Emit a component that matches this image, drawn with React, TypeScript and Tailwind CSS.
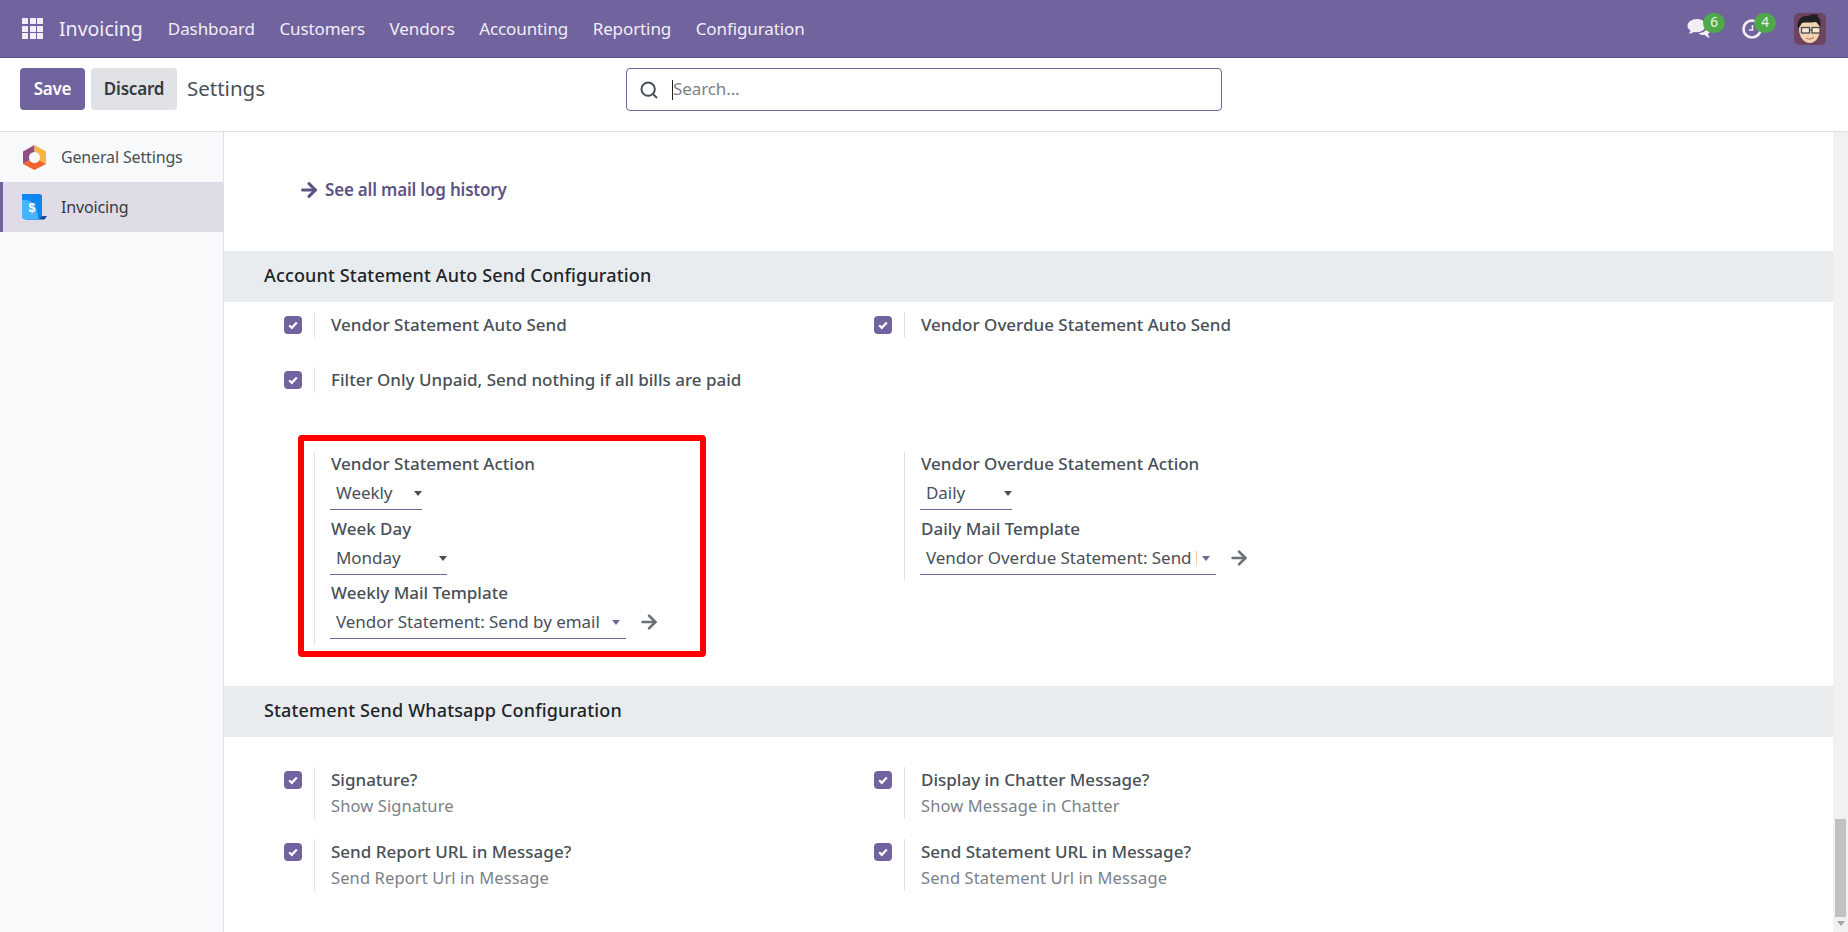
import { Search, ArrowRight } from "lucide-react";

const font = { fontFamily: '"Noto Sans", sans-serif' };

const menus = ["Dashboard", "Customers", "Vendors", "Accounting", "Reporting", "Configuration"];

function CheckBox() {
  return (
    <span className="mt-[4px] mr-[12px] flex h-[18px] w-[18px] shrink-0 items-center justify-center rounded-[4px] bg-[#71639e]">
      <svg width="12" height="12" viewBox="0 0 12 12" fill="none">
        <path d="M2.2 6.2 4.8 8.8 9.8 3.4" stroke="#fff" strokeWidth="2.2" />
      </svg>
    </span>
  );
}

function CheckRow({ label, sub }: { label: string; sub?: string }) {
  return (
    <div className="flex items-start">
      <CheckBox />
      <div className={`border-l border-[#dee2e6] pl-[16px] ${sub ? "h-[52px]" : "h-[26px]"}`}>
        <div className="pt-[1px] text-[17px] leading-[24px] font-medium text-[#495057]">{label}</div>
        {sub && <div className="mt-[2px] text-[16.5px] leading-[24px] tracking-[0.12px] text-[#7b8288]">{sub}</div>}
      </div>
    </div>
  );
}

function FieldLabel({ children }: { children: string }) {
  return <div className="h-[24px] text-[17px] leading-[24px] font-medium text-[#495057]">{children}</div>;
}

function SelectField({ value, width, purple, cut }: { value: string; width: string; purple?: boolean; cut?: boolean }) {
  return (
    <div className={`flex h-[34px] items-center border-b border-[#71639e] pt-[1px] pl-[6px] ${width}`}>
      <span className="flex-1 overflow-hidden text-[17px] tracking-[-0.05px] whitespace-nowrap text-[#495057]">{value}</span>
      {cut && <span className="h-[14px] w-px bg-[#f2c7a5]" />}
      <span className={`ml-[5px] h-0 w-0 border-x-[4px] border-t-[5px] border-x-transparent ${purple ? "mr-[6px] border-t-[#71639e]" : "border-t-[#495057]"}`} />
    </div>
  );
}

function GoArrow() {
  return <ArrowRight className="ml-[12px] text-[#6c6f76]" size={22} strokeWidth={2.8} />;
}

function HexLogo() {
  return (
    <svg width="23" height="25" viewBox="0 0 23 25">
      <path d="M11.5 0 0 6.5V19L11.5 12.500z" fill="#8f4f83" />
      <path d="M11.5 0 23 6.5V19L11.5 12.500z" fill="#f7b544" />
      <path d="M0 19 11.5 25 23 19 11.5 12.500z" fill="#f0652f" />
      <circle cx="11.500" cy="12.500" r="5.500" fill="#f8f9fa" />
    </svg>
  );
}

function InvoiceLogo() {
  return (
    <svg width="25" height="26" viewBox="0 0 25 26">
      <path d="M5 22 H25 L22.500 25.500 H5z" fill="#1b4a9e" />
      <path d="M0 0H18C19 0 20 1 20 2V22L17 25.500H4C1.500 25.500 0 24 0 21.500z" fill="#0f87f0" />
      <path d="M0 6C8 5 15 9 16.500 25.500H4C1.500 25.500 0 24 0 21.500z" fill="#46b5ff" />
      <text x="10" y="18" textAnchor="middle" fontSize="12.500" fontWeight="700" fill="#fff" fontFamily="Liberation Sans, sans-serif">$</text>
    </svg>
  );
}

function Avatar() {
  return (
    <svg width="32" height="32" viewBox="0 0 32 32" className="rounded-[5px]">
      <rect width="32" height="32" fill="#6e4560" />
      <path d="M5 16C5 9 10 6 16 6s11 4 10 12c-1 7-5 12-10 12-6 0-11-6-11-14z" fill="#f3d2b1" />
      <path d="M4 16C2 7 8 2 14 3c3-2 8-2 11-1l-2 1c4 2 4 8 3 11-2-3-3-5-5-5-4 1-10 0-13 1-1 1-2 4-4 6z" fill="#221f22" />
      <rect x="7.500" y="14.500" width="8" height="5.500" fill="#f7e6d6" stroke="#4a4a4a" strokeWidth="1.300" />
      <rect x="18" y="14.500" width="8" height="5.500" fill="#f7e6d6" stroke="#4a4a4a" strokeWidth="1.300" />
      <path d="M15.500 17h2.500" stroke="#4a4a4a" />
      <path d="M12 25c2 1.500 6 1.500 8-1" stroke="#a9654f" fill="none" />
    </svg>
  );
}

function GridIcon() {
  return (
    <div className="grid grid-cols-3 gap-[1.500px]">
      {Array.from({ length: 9 }).map((_, i) => (
        <span key={i} className="h-[6px] w-[6px] bg-[#f1eef6]" />
      ))}
    </div>
  );
}

export default function App() {
  return (
    <div className="flex h-[932px] flex-col overflow-hidden bg-white" style={font}>
      <header className="flex h-[58px] shrink-0 items-center border-b border-[#5f5385] bg-[#71639e] pl-[22px] text-[#f1eef6]">
        <GridIcon />
        <span className="ml-[16px] text-[19.500px]">Invoicing</span>
        <nav className="ml-[25px] flex gap-[24.500px] text-[17px] tracking-[-0.1px]">
          {menus.map((m) => (
            <span key={m}>{m}</span>
          ))}
        </nav>
        <div className="ml-auto flex items-center pr-[22px]">
          <span className="relative mr-[32px] h-[20px] w-[23px]">
            <svg width="24" height="20" viewBox="0 0 24 20">
              <path d="M10 0C4.500 0 .5 3 .5 6.800c0 2 1.200 3.700 3 4.800-.3 1.300-1 2.200-2 3 2 0 3.800-.6 5-1.700 1 .2 2 .3 3 .3 5.500 0 9-3 9-6.400S15.500 0 10 0z" fill="#f1eef6" />
              <path d="M21 7c1.500 1 2.500 2.500 2.500 4 0 1.700-1 3-2.500 3.800.2 1.500.8 2.700 1.800 4.200-2-.4-3.700-1.500-4.800-3-3 .3-5-.3-6.500-1.800 5-.2 9-3 9.500-7.200z" fill="#f1eef6" />
            </svg>
            <span className="absolute top-[-6px] left-[16px] flex h-[20px] w-[22px] items-center justify-center rounded-full bg-[#4fa84a] text-[13.500px] text-[#eaf7e6]">6</span>
          </span>
          <span className="relative mr-[32px] h-[20px] w-[20px]">
            <svg width="20" height="20" viewBox="0 0 20 20">
              <circle cx="10" cy="10" r="8.500" fill="none" stroke="#f1eef6" strokeWidth="2.600" />
              <path d="M10.500 6V11H7" fill="none" stroke="#f1eef6" strokeWidth="1.600" />
            </svg>
            <span className="absolute top-[-6px] left-[12px] flex h-[20px] w-[22px] items-center justify-center rounded-full bg-[#4fa84a] text-[13.500px] text-[#eaf7e6]">4</span>
          </span>
          <Avatar />
        </div>
      </header>

      <div className="flex h-[74px] shrink-0 items-start border-b border-[#dee2e6] pt-[10px] pl-[20px]">
        <button className="h-[42px] w-[65px] rounded-[4px] bg-[#71639e] text-[17px] font-semibold tracking-[-0.2px] text-white">Save</button>
        <button className="ml-[6px] h-[42px] w-[86px] rounded-[4px] bg-[#e0e2e6] text-[17px] font-semibold tracking-[-0.2px] text-[#343a40]">Discard</button>
        <span className="ml-[10px] flex h-[42px] w-[439px] items-center pb-[2px] text-[20.500px] text-[#495057]">Settings</span>
        <div className="flex h-[43px] w-[596px] items-center rounded-[4px] border border-[#71639e] pl-[12px]">
          <Search size={20} strokeWidth={2.4} className="text-[#495057]" />
          <span className="ml-[13px] h-[20px] w-px bg-[#222]" />
          <span className="pb-[2px] text-[17px] tracking-[-0.1px] text-[#7b8288]">Search...</span>
        </div>
      </div>

      <div className="flex min-h-0 flex-1">
        <aside className="w-[224px] shrink-0 border-r border-[#dee2e6] bg-[#f8f9fa] text-[#495057]">
          <div className="flex h-[50px] items-center pl-[23px]">
            <span className="flex w-[38px]">
              <HexLogo />
            </span>
            <span className="text-[16px] tracking-[-0.15px]">General Settings</span>
          </div>
          <div className="flex h-[50px] items-center border-l-[3px] border-[#71639e] bg-[#dfdce8] pl-[19px] text-[#343a40]">
            <span className="flex w-[39px]">
              <InvoiceLogo />
            </span>
            <span className="text-[16px] tracking-[-0.15px]">Invoicing</span>
          </div>
        </aside>

        <main className="min-w-0 flex-1">
          <div className="flex h-[119px] items-center pb-[3px] pl-[74px] text-[17px] font-semibold tracking-[-0.2px] text-[#5f5385]">
            <ArrowRight size={22} strokeWidth={3.4} className="mr-[5px]" />
            See all mail log history
          </div>

          <h2 className="flex h-[51px] items-center bg-[#e9ecef] pb-[2px] pl-[40px] text-[18px] font-medium tracking-[0.15px] text-[#212529]">
            Account Statement Auto Send Configuration
          </h2>

          <div className="mt-[10px] grid grid-cols-[590px_1fr] items-start pl-[60px]">
            <CheckRow label="Vendor Statement Auto Send" />
            <CheckRow label="Vendor Overdue Statement Auto Send" />
          </div>
          <div className="mt-[29px] pl-[60px]">
            <CheckRow label="Filter Only Unpaid, Send nothing if all bills are paid" />
          </div>

          <div className="mt-[59px] grid grid-cols-[590px_1fr] items-start pl-[90px]">
            <div className="relative border-l border-[#dee2e6] pb-[6px] pl-[16px]">
              <span className="absolute top-[-17px] left-[-17px] h-[222px] w-[408px] rounded-[4px] border-[6px] border-[#ff0000]" />
              <FieldLabel>Vendor Statement Action</FieldLabel>
              <SelectField value="Weekly" width="-ml-[1px] w-[92px]" />
              <div className="mt-[7px]">
                <FieldLabel>Week Day</FieldLabel>
              </div>
              <SelectField value="Monday" width="-ml-[1px] w-[117px]" />
              <div className="mt-[6px]">
                <FieldLabel>Weekly Mail Template</FieldLabel>
              </div>
              <div className="flex items-center">
                <SelectField value="Vendor Statement: Send by email" width="-ml-[1px] w-[296px]" purple />
                <GoArrow />
              </div>
            </div>
            <div className="border-l border-[#dee2e6] pb-[6px] pl-[16px]">
              <FieldLabel>Vendor Overdue Statement Action</FieldLabel>
              <SelectField value="Daily" width="-ml-[1px] w-[92px]" />
              <div className="mt-[7px]">
                <FieldLabel>Daily Mail Template</FieldLabel>
              </div>
              <div className="flex items-center">
                <SelectField value="Vendor Overdue Statement: Send" width="-ml-[1px] w-[296px]" purple cut />
                <GoArrow />
              </div>
            </div>
          </div>

          <h2 className="mt-[41px] flex h-[51px] items-center bg-[#e9ecef] pb-[2px] pl-[40px] text-[18px] font-medium tracking-[0.15px] text-[#212529]">
            Statement Send Whatsapp Configuration
          </h2>

          <div className="mt-[30px] grid grid-cols-[590px_1fr] gap-y-[20px] pl-[60px]">
            <CheckRow label="Signature?" sub="Show Signature" />
            <CheckRow label="Display in Chatter Message?" sub="Show Message in Chatter" />
            <CheckRow label="Send Report URL in Message?" sub="Send Report Url in Message" />
            <CheckRow label="Send Statement URL in Message?" sub="Send Statement Url in Message" />
          </div>
        </main>

        <div className="flex w-[15px] shrink-0 flex-col items-center justify-end bg-[#f1f1f1]">
          <div className="h-[98px] w-[11px] bg-[#c1c1c1]" />
          <span className="mt-[4px] mb-[6px] h-0 w-0 border-x-[4px] border-t-[5px] border-x-transparent border-t-[#a3a3a3]" />
        </div>
      </div>
    </div>
  );
}
